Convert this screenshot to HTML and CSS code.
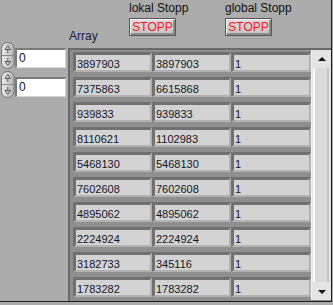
FILE: index.html
```html
<!DOCTYPE html>
<html lang="de">
<head>
    <meta charset="UTF-8">
    <title>Array</title>
    <link rel="stylesheet" href="styles.css">
</head>
<body>
<div class="panel">
    <!-- array index ------------------------------------------------------>
    <div class="indices">
        <div class="index">
            <svg class="spin" width="14" height="27" viewBox="0 0 14 27">
                <defs>
                    <linearGradient id="sg" x1="0" x2="1" y1="0" y2="0">
                        <stop offset="0" stop-color="#ececec"/>
                        <stop offset="1" stop-color="#b4b4b4"/>
                    </linearGradient>
                </defs>
                <rect x="0.5" y="0.5" width="12.5" height="26" rx="6" fill="url(#sg)" stroke="#707070"/>
                <path d="M1 13.5h12" stroke="#8a8a8a"/>
                <path d="M4 7.5 L6.8 3.5 L9.5 7.5 Z M6.8 7.5 V11" fill="none" stroke="#5a5a5a"/>
                <path d="M4 19.5 L6.8 23.5 L9.5 19.5 Z M6.8 19.5 V16" fill="none" stroke="#5a5a5a"/>
            </svg>
            <div class="num-box">0</div>
        </div>
        <div class="index">
            <svg class="spin" width="14" height="27" viewBox="0 0 14 27">
                <rect x="0.5" y="0.5" width="12.5" height="26" rx="6" fill="url(#sg)" stroke="#707070"/>
                <path d="M1 13.5h12" stroke="#8a8a8a"/>
                <path d="M4 7.5 L6.8 3.5 L9.5 7.5 Z M6.8 7.5 V11" fill="none" stroke="#5a5a5a"/>
                <path d="M4 19.5 L6.8 23.5 L9.5 19.5 Z M6.8 19.5 V16" fill="none" stroke="#5a5a5a"/>
            </svg>
            <div class="num-box">0</div>
        </div>
    </div>

    <!-- array + buttons -------------------------------------------------->
    <div class="array">
        <div class="array-head">
            <span class="array-label">Array</span>
            <div class="stop">
                <span>lokal Stopp</span>
                <button class="btn-stop">STOPP</button>
            </div>
            <div class="stop">
                <span>global Stopp</span>
                <button class="btn-stop">STOPP</button>
            </div>
        </div>
        <div class="array-frame">
            <div class="cells" id="cells"></div>
            <div class="scrollbar">
                <div class="sb-up"><span class="tri-up"></span></div>
                <div class="sb-thumb"></div>
                <div class="sb-down"><span class="tri-down"></span></div>
            </div>
        </div>
    </div>
</div>

<script>
    // rows of the array
    const rows = [
        [3897903, 3897903, 1],
        [7375863, 6615868, 1],
        [939833, 939833, 1],
        [8110621, 1102983, 1],
        [5468130, 5468130, 1],
        [7602608, 7602608, 1],
        [4895062, 4895062, 1],
        [2224924, 2224924, 1],
        [3182733, 345116, 1],
        [1783282, 1783282, 1]
    ];

    const cells = document.getElementById("cells");
    rows.forEach(row => {
        row.forEach(value => {
            const cell = document.createElement('div');
            cell.classList.add('cell');
            cell.textContent = value;
            cells.appendChild(cell);
        });
    });
</script>
</body>
</html>
```

FILE: styles.css
```css
body {
  margin: 0;
  background-color: #acacac;
  font-family: "Liberation Sans", Arial, sans-serif;
  font-size: 12px;
  color: #111;
}
.panel {
  display: flex;
  width: 331px;
  height: 301px;
  border-right: 1px solid #1c1c1c;
  border-bottom: 1px solid #1c1c1c;
}

/* index controls */
.indices {
  width: 66px;
  padding-top: 42px;
}
.index {
  display: flex;
  align-items: flex-start;
  margin-left: 1px;
  margin-bottom: 2px;
}
.spin {
  display: block;
}
.num-box {
  margin-top: 6px;
  width: 46px;
  height: 17px;
  background-color: #fff;
  border-top: 2px solid #7a7a7a;
  border-left: 2px solid #7a7a7a;
  border-bottom: 1px solid #d6d6d6;
  border-right: 1px solid #d6d6d6;
  padding-left: 2px;
  font-size: 12px;
  line-height: 17px;
}

/* array */
.array {
  flex: 1;
  display: flex;
  flex-direction: column;
}
.array-head {
  display: grid;
  grid-template-columns: 63px 96px auto;
  height: 48px;
}
.array-label {
  margin-top: 29px;
  padding-left: 3px;
  line-height: 14px;
  color: #1a1a3a;
}
.stop {
  display: flex;
  flex-direction: column;
  align-items: flex-start;
  padding-top: 1px;
  line-height: 14px;
}
.btn-stop {
  margin-top: 3px;
  width: 47px;
  height: 18px;
  padding: 0;
  background: linear-gradient(#dedede, #c2c2c2);
  border: 1px solid #555;
  box-shadow: inset 1px 1px 0 #f6f6f6, inset -2px -2px 0 #8c8c8c;
  color: #ff1020;
  font-family: "Liberation Sans", Arial, sans-serif;
  font-size: 12px;
  line-height: 16px;
}

.array-frame {
  flex: 1;
  display: flex;
  margin-left: 2px;
  background-color: #8f8f8f;
  border-top: 2px solid #6a6a6a;
  border-left: 2px solid #6a6a6a;
  padding: 2px 0 0 3px;
}
.cells {
  display: grid;
  grid-template-columns: 79px 79px 80px;
  grid-auto-rows: 20px;
  row-gap: 5px;
  align-content: start;
}
.cell {
  height: 13px;
  padding: 2px 0 0 1px;
  background-color: #d3d3d3;
  border-top: 3px solid #707070;
  border-left: 3px solid #707070;
  border-bottom: 2px solid #b2b2b2;
  border-right: 2px solid #b2b2b2;
  font-size: 11px;
  line-height: 14px;
  color: #141428;
}

/* scrollbar */
.scrollbar {
  width: 19px;
  margin-top: -2px;
  margin-bottom: 1px;
  display: flex;
  flex-direction: column;
  background-color: #e4e4e4;
  border-left: 1px solid #f4f4f4;
}
.sb-up, .sb-down {
  height: 17px;
  display: flex;
  justify-content: center;
  align-items: center;
}
.sb-thumb {
  flex: 1;
  margin: 1px 2px 1px 1px;
  background-color: #dadada;
  border-left: 2px solid #fbfbfb;
  border-right: 2px solid #c4c4c4;
}
.tri-up {
  width: 0;
  height: 0;
  border-left: 4px solid transparent;
  border-right: 4px solid transparent;
  border-bottom: 4px solid #111;
}
.tri-down {
  width: 0;
  height: 0;
  border-left: 4px solid transparent;
  border-right: 4px solid transparent;
  border-top: 4px solid #111;
}
```
